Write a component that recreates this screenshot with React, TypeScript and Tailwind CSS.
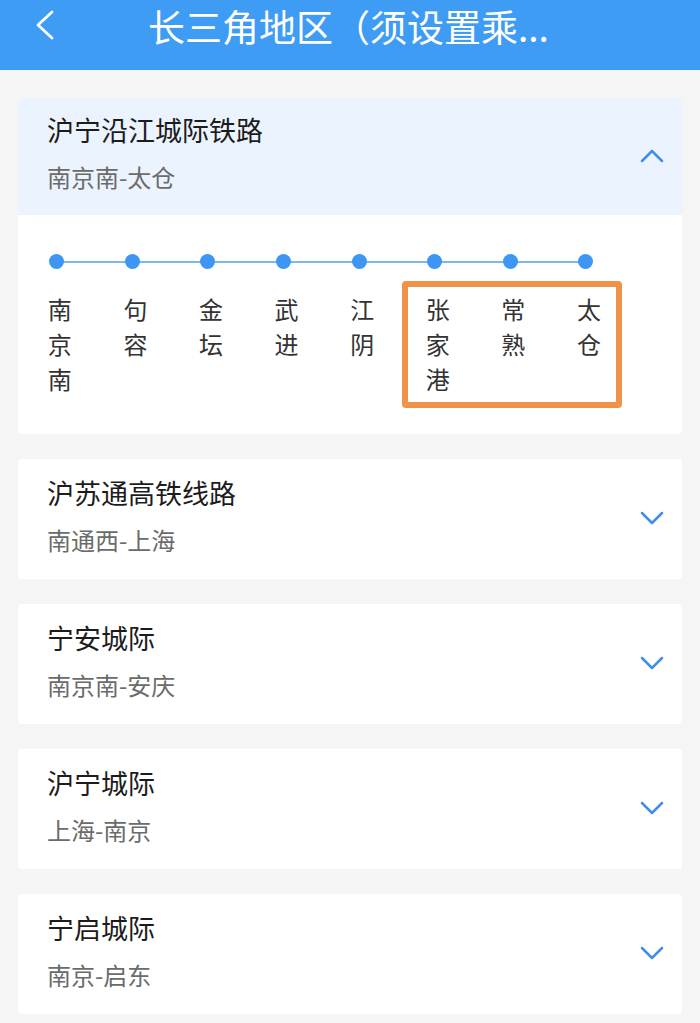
import { ChevronDown, ChevronUp } from "lucide-react";

interface ILine {
    name: string,
    range: string,
}

const stations = ["南京南", "句容", "金坛", "武进", "江阴", "张家港", "常熟", "太仓"];

const otherLines: ILine[] = [
    { name: "沪苏通高铁线路", range: "南通西-上海" },
    { name: "宁安城际", range: "南京南-安庆" },
    { name: "沪宁城际", range: "上海-南京" },
    { name: "宁启城际", range: "南京-启东" },
];

function LineHeader({ line, open }: { line: ILine, open: boolean }) {
    return (
        <div className={`flex items-center pl-[29px] pr-[10px] pb-[8px] ${open ? "h-[117px] bg-[#ebf3fe]" : "h-[120px]"}`}>
            <div className="flex-1 flex flex-col">
                <div className="text-[27px] leading-[34px] text-[#1c1c1c]">{line.name}</div>
                <div className="mt-[15px] text-[24px] leading-[30px] text-[#6b6b6b]">{line.range}</div>
            </div>
            {open
                ? <ChevronUp size={40} strokeWidth={1.5} className="text-[#3f8fe6] mt-[6px]" />
                : <ChevronDown size={40} strokeWidth={1.5} className="text-[#3f8fe6] mt-[6px]" />}
        </div>
    )
}

export default function App() {
    return (
        <div className="min-h-[1023px] bg-[#f5f5f5] font-['Noto_Sans_CJK_SC',sans-serif]">
            <div className="h-[70px] bg-[#3e9cf4] flex items-start pt-[6px]">
                <div className="w-[148px] pl-[35px] pt-[4px]">
                    <svg width="20" height="30" viewBox="0 0 20 30">
                        <polyline points="17,2 3,15 17,28" fill="none" stroke="white" strokeWidth="2.8" strokeLinecap="round" strokeLinejoin="round" />
                    </svg>
                </div>
                <span className="text-[37px] leading-[40px] text-white whitespace-nowrap">长三角地区（须设置乘...</span>
            </div>

            <div className="flex flex-col gap-[25px] pt-[28px] px-[18px] pb-[10px]">
                <div className="relative bg-white rounded-[4px] overflow-hidden">
                    <LineHeader line={{ name: "沪宁沿江城际铁路", range: "南京南-太仓" }} open={true} />
                    <div className="pt-[39px] pb-[38px] pl-[1px]">
                        <div className="relative flex w-fit">
                            <div className="absolute left-[38px] right-[38px] top-[7px] h-[2px] bg-[#7db8ec]"></div>
                            {stations.map((s) => (
                                <div key={s} className="w-[75.6px] flex flex-col items-center">
                                    <div className="relative w-[15px] h-[15px] rounded-full bg-[#3d96f3]"></div>
                                    <div className="mt-[22px] flex flex-col items-center text-[24px] leading-[35px] text-[#333] pl-[6px]">
                                        {s.split("").map((c, i) => <span key={i}>{c}</span>)}
                                    </div>
                                </div>
                            ))}
                        </div>
                    </div>
                    <div className="absolute left-[384px] top-[183px] w-[220px] h-[127px] border-[6px] border-[#f0924a] rounded-[4px]"></div>
                </div>

                {otherLines.map((l) => (
                    <div key={l.name} className="bg-white rounded-[4px]">
                        <LineHeader line={l} open={false} />
                    </div>
                ))}
            </div>
        </div>
    )
}
